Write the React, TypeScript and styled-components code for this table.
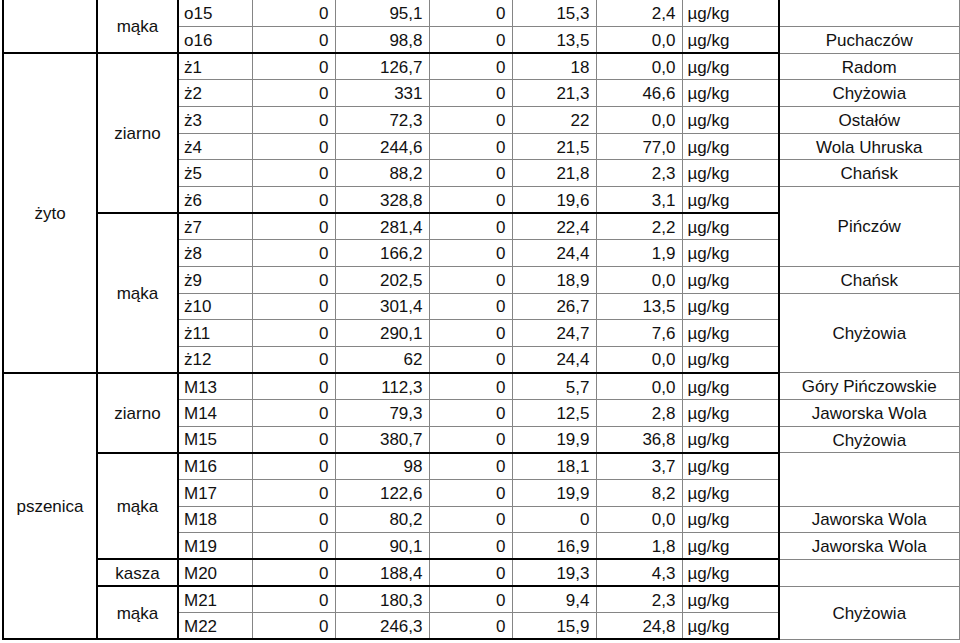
import React from "react";
import styled, { createGlobalStyle } from "styled-components";

const Global = createGlobalStyle`
  html, body { margin: 0; padding: 0; background: #fff; }
  body { font-family: "Liberation Sans", Arial, sans-serif; color: #111; }
`;

const Table = styled.table`
  border-collapse: collapse;
  table-layout: fixed;
  width: 956px;
  margin: 0 0 0 2px;
  font-size: 17px;
  line-height: 1;
`;

const Row = styled.tr`
  height: 26.65px;
`;

type CellProps = {
  $align: "left" | "right" | "center";
  $thickBottom?: boolean;
  $thickRight?: boolean;
  $thickLeft?: boolean;
  $noTop?: boolean;
};

const Cell = styled.td<CellProps>`
  padding: 1px ${(p) => (p.$align === "right" ? "6px" : "0")} 0 ${(p) => (p.$align === "left" ? "5px" : "0")};
  text-align: ${(p) => p.$align};
  vertical-align: middle;
  white-space: nowrap;
  border: 1px solid #858585;
  border-top: ${(p) => (p.$noTop ? "none" : "1px solid #858585")};
  border-bottom: ${(p) => (p.$thickBottom ? "2px solid #000" : "1px solid #858585")};
  border-right: ${(p) => (p.$thickRight ? "2px solid #000" : "1px solid #858585")};
  ${(p) => (p.$thickLeft ? "border-left: 2px solid #000;" : "")}
`;

const rows: string[][] = [
  ["o15", "0", "95,1", "0", "15,3", "2,4"],
  ["o16", "0", "98,8", "0", "13,5", "0,0"],
  ["ż1", "0", "126,7", "0", "18", "0,0"],
  ["ż2", "0", "331", "0", "21,3", "46,6"],
  ["ż3", "0", "72,3", "0", "22", "0,0"],
  ["ż4", "0", "244,6", "0", "21,5", "77,0"],
  ["ż5", "0", "88,2", "0", "21,8", "2,3"],
  ["ż6", "0", "328,8", "0", "19,6", "3,1"],
  ["ż7", "0", "281,4", "0", "22,4", "2,2"],
  ["ż8", "0", "166,2", "0", "24,4", "1,9"],
  ["ż9", "0", "202,5", "0", "18,9", "0,0"],
  ["ż10", "0", "301,4", "0", "26,7", "13,5"],
  ["ż11", "0", "290,1", "0", "24,7", "7,6"],
  ["ż12", "0", "62", "0", "24,4", "0,0"],
  ["M13", "0", "112,3", "0", "5,7", "0,0"],
  ["M14", "0", "79,3", "0", "12,5", "2,8"],
  ["M15", "0", "380,7", "0", "19,9", "36,8"],
  ["M16", "0", "98", "0", "18,1", "3,7"],
  ["M17", "0", "122,6", "0", "19,9", "8,2"],
  ["M18", "0", "80,2", "0", "0", "0,0"],
  ["M19", "0", "90,1", "0", "16,9", "1,8"],
  ["M20", "0", "188,4", "0", "19,3", "4,3"],
  ["M21", "0", "180,3", "0", "9,4", "2,3"],
  ["M22", "0", "246,3", "0", "15,9", "24,8"],
];

type Span = { start: number; span: number; text: string };

const grains: Span[] = [
  { start: 0, span: 2, text: "" },
  { start: 2, span: 12, text: "żyto" },
  { start: 14, span: 10, text: "pszenica" },
];

const kinds: Span[] = [
  { start: 0, span: 2, text: "mąka" },
  { start: 2, span: 6, text: "ziarno" },
  { start: 8, span: 6, text: "mąka" },
  { start: 14, span: 3, text: "ziarno" },
  { start: 17, span: 4, text: "mąka" },
  { start: 21, span: 1, text: "kasza" },
  { start: 22, span: 2, text: "mąka" },
];

const places: Span[] = [
  { start: 0, span: 1, text: "" },
  { start: 1, span: 1, text: "Puchaczów" },
  { start: 2, span: 1, text: "Radom" },
  { start: 3, span: 1, text: "Chyżowia" },
  { start: 4, span: 1, text: "Ostałów" },
  { start: 5, span: 1, text: "Wola Uhruska" },
  { start: 6, span: 1, text: "Chańsk" },
  { start: 7, span: 3, text: "Pińczów" },
  { start: 10, span: 1, text: "Chańsk" },
  { start: 11, span: 3, text: "Chyżowia" },
  { start: 14, span: 1, text: "Góry Pińczowskie" },
  { start: 15, span: 1, text: "Jaworska Wola" },
  { start: 16, span: 1, text: "Chyżowia" },
  { start: 17, span: 2, text: "" },
  { start: 19, span: 1, text: "Jaworska Wola" },
  { start: 20, span: 1, text: "Jaworska Wola" },
  { start: 21, span: 1, text: "" },
  { start: 22, span: 2, text: "Chyżowia" },
];

const groupEnds = new Set(kinds.map((k) => k.start + k.span - 1));
const widths = [94, 81, 74, 83, 94, 83, 84, 86, 97, 180];
const aligns: CellProps["$align"][] = ["left", "right", "right", "right", "right", "right", "left"];

export default function App() {
  return (
    <>
      <Global />
      <Table>
        <colgroup>
          {widths.map((w, i) => (
            <col key={i} style={{ width: w }} />
          ))}
        </colgroup>
        <tbody>
          {rows.map((r, i) => {
            const g = grains.find((s) => s.start === i);
            const k = kinds.find((s) => s.start === i);
            const p = places.find((s) => s.start === i);
            const end = groupEnds.has(i);
            const values = [...r, "µg/kg"];
            return (
              <Row key={i}>
                {g && (
                  <Cell
                    rowSpan={g.span}
                    $align="center"
                    $thickLeft
                    $thickRight
                    $thickBottom
                    $noTop={i === 0}
                  >
                    {g.text}
                  </Cell>
                )}
                {k && (
                  <Cell rowSpan={k.span} $align="center" $thickRight $thickBottom $noTop={i === 0}>
                    {k.text}
                  </Cell>
                )}
                {values.map((v, j) => (
                  <Cell
                    key={j}
                    $align={aligns[j]}
                    $thickBottom={end}
                    $thickRight={j === 6}
                    $noTop={i === 0}
                  >
                    {v}
                  </Cell>
                ))}
                {p && (
                  <Cell rowSpan={p.span} $align="center" $noTop={i === 0}>
                    {p.text}
                  </Cell>
                )}
              </Row>
            );
          })}
        </tbody>
      </Table>
    </>
  );
}
